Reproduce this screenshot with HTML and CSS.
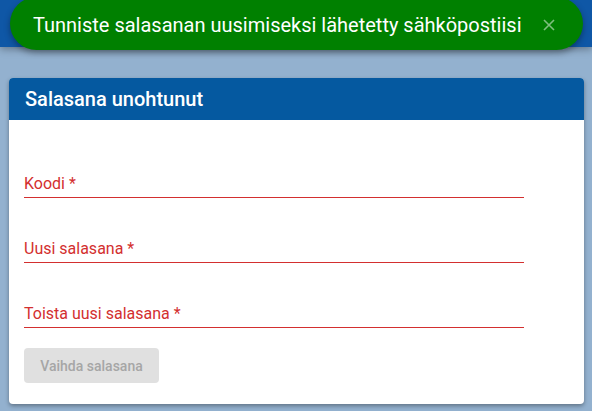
FILE: index.html
```html
<!DOCTYPE html>
<html lang="fi">
<head>
<meta charset="utf-8">
<title>Salasana unohtunut</title>
<link rel="stylesheet" href="styles.css">
</head>
<body>
<div class="appbar"></div>
<main class="page">
  <section class="card">
    <div class="card-header">Salasana unohtunut</div>
    <form class="card-body">
      <div class="field"><label>Koodi *</label></div>
      <div class="field"><label>Uusi salasana *</label></div>
      <div class="field"><label>Toista uusi salasana *</label></div>
      <button type="button" class="btn" disabled>Vaihda salasana</button>
    </form>
  </section>
</main>
<div class="snackbar">
  <span class="snack-text">Tunniste salasanan uusimiseksi lähetetty sähköpostiisi</span>
  <svg class="snack-close" width="12" height="12" viewBox="0 0 12 12"><path d="M1 1L11 11M11 1L1 11" stroke="currentColor" stroke-width="1.6" fill="none"/></svg>
</div>
</body>
</html>
```
FILE: styles.css
```css
* { box-sizing: border-box; }
html, body { margin: 0; padding: 0; }
body {
  background: #93b1cf;
  font-family: Roboto, "Liberation Sans", sans-serif;
  width: 592px;
  height: 411px;
  overflow: hidden;
  position: relative;
}
.appbar {
  height: 47px;
  background: #0f57a6;
  box-shadow: 0 2px 8px rgba(0,0,0,0.35);
}
.page {
  padding: 31px 8px 0 9px;
}
.card {
  width: 575px;
  background: #fff;
  border-radius: 4px;
  overflow: hidden;
  box-shadow: 0 2px 4px rgba(0,0,0,0.35);
}
.card-header {
  height: 42px;
  background: #0559a0;
  color: #fff;
  font-size: 20px;
  font-weight: 500;
  line-height: 42px;
  padding-left: 16px;
}
.card-body {
  margin: 0;
  padding: 13px 15px 21px 15px;
  display: flex;
  flex-direction: column;
  align-items: flex-start;
}
.field {
  width: 500px;
  padding-top: 41px;
  padding-bottom: 4px;
  border-bottom: 1px solid #d32f2f;
}
.field label {
  display: block;
  font-size: 16px;
  line-height: 19px;
  color: #d32f2f;
}
.btn {
  margin-top: 20px;
  height: 35px;
  width: 135px;
  border: none;
  border-radius: 4px;
  background: #e0e0e0;
  color: #a6a6a6;
  font-family: Roboto, "Liberation Sans", sans-serif;
  font-size: 14px;
  font-weight: 500;
  padding: 0 16px;
}
.snackbar {
  position: absolute;
  left: 10px;
  top: -3px;
  width: 573px;
  height: 53px;
  border-radius: 27px;
  background: #008000;
  box-shadow: 0 3px 6px rgba(0,0,0,0.35);
  display: flex;
  align-items: center;
  padding: 3px 0 0 23px;
}
.snack-text {
  color: #fff;
  font-size: 20px;
  flex: 1;
}
.snack-close {
  color: #7fbf7f;
  margin-right: 28px;
}
```
